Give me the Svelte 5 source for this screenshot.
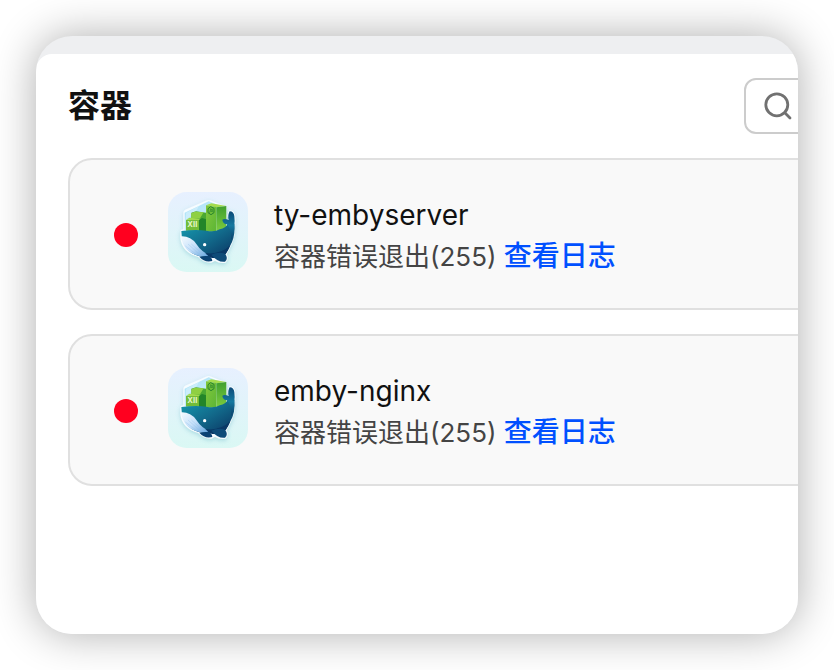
<script>
  const containers = [
    { id: 'embyserver', name: 'ty-embyserver', exitCode: 255 },
    { id: 'nginx', name: 'emby-nginx', exitCode: 255 },
  ];

  let query = $state('');

  const visible = $derived(
    containers.filter((c) => c.name.includes(query.trim().toLowerCase()))
  );
</script>

{#snippet whale(id)}
  <svg class="app-icon" viewBox="24 24 240 240" aria-hidden="true">
    <defs>
      <linearGradient id="bg-{id}" x1="0" y1="0" x2="0" y2="1">
        <stop offset="0" stop-color="#e7f0ff" />
        <stop offset="1" stop-color="#daf8f4" />
      </linearGradient>
      <linearGradient id="hex-{id}" x1="0" y1="0" x2="1" y2="1">
        <stop offset="0" stop-color="#a4dff6" />
        <stop offset="1" stop-color="#e4f8ff" />
      </linearGradient>
      <linearGradient id="body-{id}" x1="0" y1="0" x2="1" y2="1">
        <stop offset="0" stop-color="#159bb0" />
        <stop offset="0.5" stop-color="#126a8b" />
        <stop offset="1" stop-color="#0a3260" />
      </linearGradient>
      <linearGradient id="tail-{id}" x1="0" y1="0" x2="0" y2="1">
        <stop offset="0" stop-color="#0d4a78" />
        <stop offset="0.5" stop-color="#1479a0" />
        <stop offset="1" stop-color="#0b3d68" />
      </linearGradient>
      <linearGradient id="belly-{id}" x1="0" y1="0" x2="1" y2="1">
        <stop offset="0" stop-color="#f5fbff" />
        <stop offset="0.5" stop-color="#c5e0fa" />
        <stop offset="1" stop-color="#5f9fd8" />
      </linearGradient>
      <linearGradient id="box-{id}" x1="0" y1="0" x2="1" y2="1">
        <stop offset="0" stop-color="#82c83c" />
        <stop offset="1" stop-color="#5cb535" />
      </linearGradient>
      <linearGradient id="side-{id}" x1="0" y1="0" x2="0" y2="1">
        <stop offset="0" stop-color="#3f9f2f" />
        <stop offset="1" stop-color="#7ccb3e" />
      </linearGradient>
      <filter id="glow-{id}" x="-20%" y="-20%" width="140%" height="150%">
        <feDropShadow dx="0" dy="5" stdDeviation="7" flood-color="#4ba7bd" flood-opacity="0.35" />
      </filter>
    </defs>
    <rect x="24" y="24" width="240" height="240" rx="56" fill="url(#bg-{id})" />
    <g filter="url(#glow-{id})">
      <path
        d="M70 86 Q70 81 75 77 L141 49 Q147 46 154 50 L200 68 V104 Q192 101 187 106 Q184 114 192 118 L200 118 L205 104 Q200 92 208 79 Q220 78 225 92 Q228 108 225 128 Q226 160 213 185 L200 211 Q208 224 197 236 Q180 240 165 230 L154 236 Q130 237 115 219 Q66 206 61 162 Q60 148 62 138 L70 136 Z"
        fill="#f6fcff"
      />
      <path d="M74 86 L146 52 L199 73 V138 H74 Z" fill="url(#hex-{id})" />
      <path d="M78 86 L117 66 L108 82 L78 108 Z" fill="#ffffff" opacity="0.3" />
    </g>
    <path d="M94 86 L108 82 L138 86 V137 H94 Z" fill="#4aa832" />
    <path d="M94 88 L105 83 L131 85 L120 103 H94 Z" fill="#8fd042" />
    <path d="M78 107 L89 101 L122 104 L117 109 Z" fill="#a2d94d" />
    <path d="M78 108 H117 V140 H78 Z" fill="#73bd38" />
    <path d="M117 108 L126 102 L139 106 V141 H117 Z" fill="#238529" />
    <path d="M138 64 L154 58 L199 66 L169 70 Z" fill="#a4dc4d" />
    <path d="M138 64 L169 69 V143 H138 Z" fill="url(#box-{id})" />
    <path d="M169 70 L199 66 V140 H169 Z" fill="url(#side-{id})" />
    <path d="M152 68 L162 73 V86 L153 92 L144 86 V74 Z" fill="none" stroke="#26832c" stroke-width="3" />
    <path d="M151 73 V83 Q151 86 147 84 M159 76 Q153 74 153 78 Q159 79 159 82 Q157 85 153 82" fill="none" stroke="#26832c" stroke-width="2" />
    <text class="box-label" x="82" y="130">XII</text>
    <path
      d="M64 141 Q105 136 139 140 Q164 145 179 136 Q198 132 203 119 L223 119 Q227 158 210 186 L197 210 Q160 226 116 216 Q66 202 64 141 Z"
      fill="url(#body-{id})"
    />
    <path
      d="M187 107 Q194 103 206 108 Q202 94 209 82 Q221 82 223 96 Q225 112 223 124 Q224 148 214 168 Q215 138 201 121 Q188 119 187 107 Z"
      fill="url(#tail-{id})"
    />
    <path d="M64 157 Q92 156 109 180 Q124 203 148 213 Q140 221 117 216 Q68 204 64 157 Z" fill="url(#belly-{id})" />
    <path d="M76 186 L110 212 M84 180 L122 214 M94 180 L132 214" fill="none" stroke="#8dbde9" stroke-width="2" opacity="0.5" />
    <path d="M136 207 Q180 214 211 184 Q204 202 197 210 Q180 224 156 222 Q146 220 136 207 Z" fill="#093866" />
    <path d="M118 218 Q135 215 150 217 Q156 224 157 231 Q134 237 118 218 Z" fill="#0b4273" />
    <path d="M154 212 Q174 202 195 209 Q206 223 195 233 Q174 236 154 212 Z" fill="#0e4b78" />
    <circle cx="134" cy="182" r="5" fill="#ffffff" />
  </svg>
{/snippet}

<main class="window">
  <div class="topbar"></div>
  <section class="sheet">
    <header class="sheet-header">
      <h1>容器</h1>
      <label class="search">
        <svg viewBox="0 0 32 32" aria-hidden="true">
          <circle cx="14.8" cy="14.8" r="11" />
          <path d="M22.8 22.8 L28 28" />
        </svg>
        <input type="search" aria-label="搜索" bind:value={query} />
      </label>
    </header>

    <ul class="container-list">
      {#each visible as container (container.id)}
        <li class="container-card">
          <span class="status-dot"></span>
          {@render whale(container.id)}
          <div class="info">
            <h2>{container.name}</h2>
            <p>容器错误退出({container.exitCode}) <a href="#{container.id}">查看日志</a></p>
          </div>
        </li>
      {/each}
    </ul>
  </section>
</main>

<style>
  :global(body) {
    margin: 0;
    background: #fff;
  }

  .window {
    box-sizing: border-box;
    display: flex;
    flex-direction: column;
    min-height: calc(100vh - 72px);
    margin: 36px;
    border-radius: 36px;
    overflow: hidden;
    background: #eeeff1;
    box-shadow: 0 0 44px rgba(0, 0, 0, 0.32);
    font-family: Inter, "Noto Sans CJK SC", sans-serif;
    color: #111;
  }

  .topbar {
    height: 18px;
  }

  /* wider than the window, the right side runs out of view */
  .sheet {
    flex: 1;
    margin-right: -186px;
    padding: 24px 0 24px 32px;
    border-radius: 16px 0 0 0;
    background: #fff;
  }

  .sheet-header {
    display: flex;
    align-items: center;
    justify-content: space-between;
    margin-bottom: 24px;
  }

  h1 {
    margin: 0;
    font-size: 32px;
    font-weight: 700;
    line-height: 56px;
  }

  .search {
    box-sizing: border-box;
    display: flex;
    align-items: center;
    gap: 12px;
    width: 240px;
    height: 56px;
    padding: 0 16px;
    border: 2px solid #ccc;
    border-radius: 12px;
  }

  .search svg {
    flex: none;
    width: 32px;
    height: 32px;
    fill: none;
    stroke: #717171;
    stroke-width: 2.8;
    stroke-linecap: round;
  }

  .search input {
    flex: 1;
    min-width: 0;
    padding: 0;
    border: 0;
    outline: 0;
    background: none;
    font: inherit;
    font-size: 26px;
  }

  .container-list {
    display: flex;
    flex-direction: column;
    gap: 24px;
    margin: 0;
    padding: 0;
    list-style: none;
  }

  .container-card {
    display: flex;
    align-items: flex-start;
    padding: 32px 44px 30px;
    border: 2px solid #e0e0e0;
    border-radius: 24px;
    background: #f9f9f9;
  }

  .status-dot {
    align-self: center;
    width: 24px;
    height: 24px;
    margin-right: 30px;
    border-radius: 50%;
    background: #ff001f;
  }

  .app-icon {
    flex: none;
    width: 80px;
    height: 80px;
    margin-right: 26px;
  }

  .box-label {
    font-size: 23px;
    font-weight: 700;
    fill: #e5f6c8;
  }

  .info {
    padding-top: 2px;
  }

  .info h2,
  .info p {
    margin: 0;
    font-weight: 400;
    line-height: 42px;
    white-space: nowrap;
  }

  .info h2 {
    font-size: 28px;
  }

  .info p {
    font-size: 26px;
    color: #444;
  }

  .info a {
    font-size: 28px;
    font-weight: 500;
    line-height: 28px;
    color: #0050ff;
    text-decoration: none;
  }
</style>
